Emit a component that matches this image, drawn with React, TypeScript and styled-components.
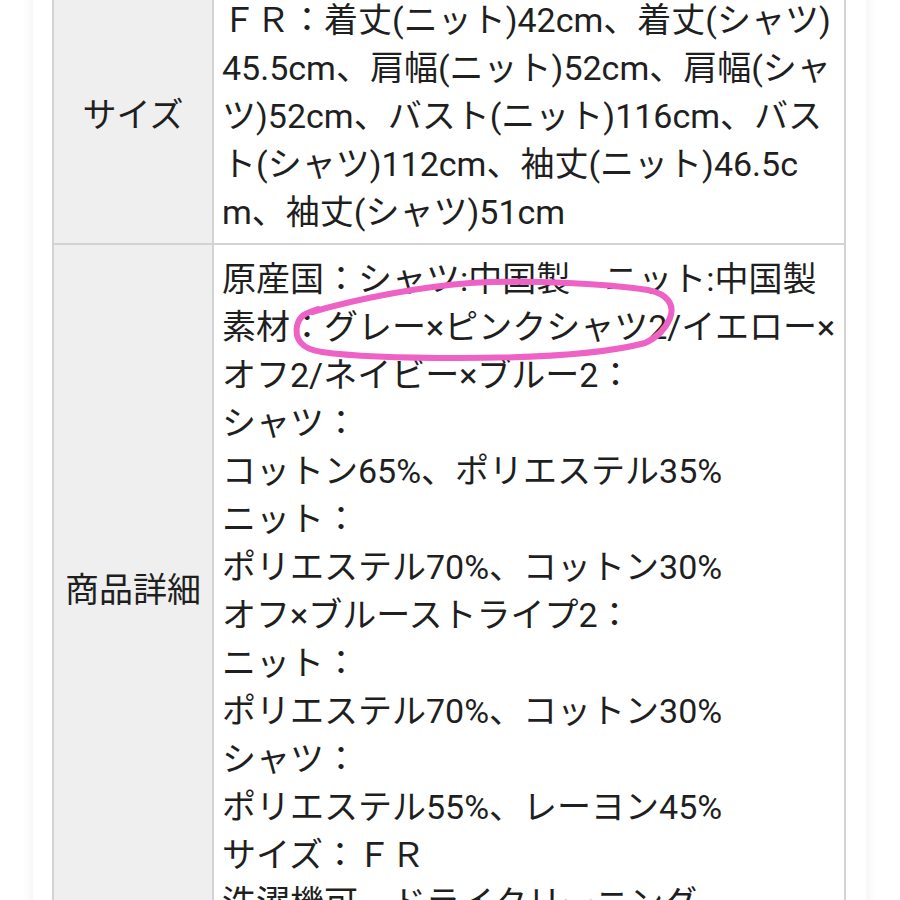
import React from "react";
import styled, { createGlobalStyle } from "styled-components";

const GlobalStyle = createGlobalStyle`
  html, body {
    margin: 0;
    padding: 0;
    background: #ffffff;
  }
  body {
    font-family: Roboto, "Noto Sans CJK JP", sans-serif;
    color: #1f1f1f;
  }
`;

const Page = styled.div`
  position: relative;
  display: flex;
  flex-direction: column;
  width: 900px;
  height: 900px;
  overflow: hidden;
  background: #ffffff;
`;

const Card = styled.div`
  display: flex;
  flex-direction: column;
  margin: -40px 34px 0 33px;
  padding: 24px 0 0 19px;
  background: #ffffff;
  box-shadow: 0 0 12px rgba(0, 0, 0, 0.07);
`;

const SpecTable = styled.table`
  width: 794px;
  border-collapse: collapse;
  border: 2px solid #d3d3d3;
  table-layout: fixed;
`;

const LabelCell = styled.th`
  width: 158px;
  padding: 0;
  background: #efefef;
  border: 2px solid #d3d3d3;
  font-weight: 400;
  font-size: 34px;
  line-height: 48px;
  text-align: center;
  vertical-align: middle;
  color: #1f1f1f;
`;

const ValueCell = styled.td`
  padding: 10px 4px 7px 8px;
  background: #ffffff;
  border: 2px solid #d3d3d3;
  vertical-align: top;
`;

const Line = styled.div`
  font-size: 34px;
  line-height: 48px;
  white-space: nowrap;
  color: #1f1f1f;
`;

const Annotation = styled.svg`
  position: absolute;
  left: 0;
  top: 0;
  width: 900px;
  height: 900px;
  pointer-events: none;
`;

const sizeLines = [
  "ＦＲ：着丈(ニット)42cm、着丈(シャツ)",
  "45.5cm、肩幅(ニット)52cm、肩幅(シャ",
  "ツ)52cm、バスト(ニット)116cm、バス",
  "ト(シャツ)112cm、袖丈(ニット)46.5c",
  "m、袖丈(シャツ)51cm",
];

const detailLines = [
  "原産国：シャツ:中国製　ニット:中国製",
  "素材：グレー×ピンクシャツ2/イエロー×",
  "オフ2/ネイビー×ブルー2：",
  "シャツ：",
  "コットン65%、ポリエステル35%",
  "ニット：",
  "ポリエステル70%、コットン30%",
  "オフ×ブルーストライプ2：",
  "ニット：",
  "ポリエステル70%、コットン30%",
  "シャツ：",
  "ポリエステル55%、レーヨン45%",
  "サイズ：ＦＲ",
  "洗濯機可　ドライクリーニング",
];

export default function App() {
  return (
    <>
      <GlobalStyle />
      <Page>
        <Card>
          <SpecTable>
            <tbody>
              <tr>
                <LabelCell>サイズ</LabelCell>
                <ValueCell>
                  {sizeLines.map((l, i) => (
                    <Line key={i}>{l}</Line>
                  ))}
                </ValueCell>
              </tr>
              <tr>
                <LabelCell>商品詳細</LabelCell>
                <ValueCell>
                  {detailLines.map((l, i) => (
                    <Line key={i}>{l}</Line>
                  ))}
                </ValueCell>
              </tr>
            </tbody>
          </SpecTable>
        </Card>
        <Annotation viewBox="0 0 900 900">
          <path
            d="M 312 312 C 360 298, 420 287, 470 283 C 530 280, 600 283, 648 290 C 668 294, 675 305, 670 318 C 665 330, 656 338, 645 343 C 600 355, 520 358, 460 358 C 400 358, 350 356, 322 352 C 300 349, 295 338, 297 326 C 299 316, 305 313, 318 309"
            fill="none"
            stroke="#ee62c6"
            strokeWidth="6"
            strokeLinecap="round"
            strokeLinejoin="round"
          />
        </Annotation>
      </Page>
    </>
  );
}
